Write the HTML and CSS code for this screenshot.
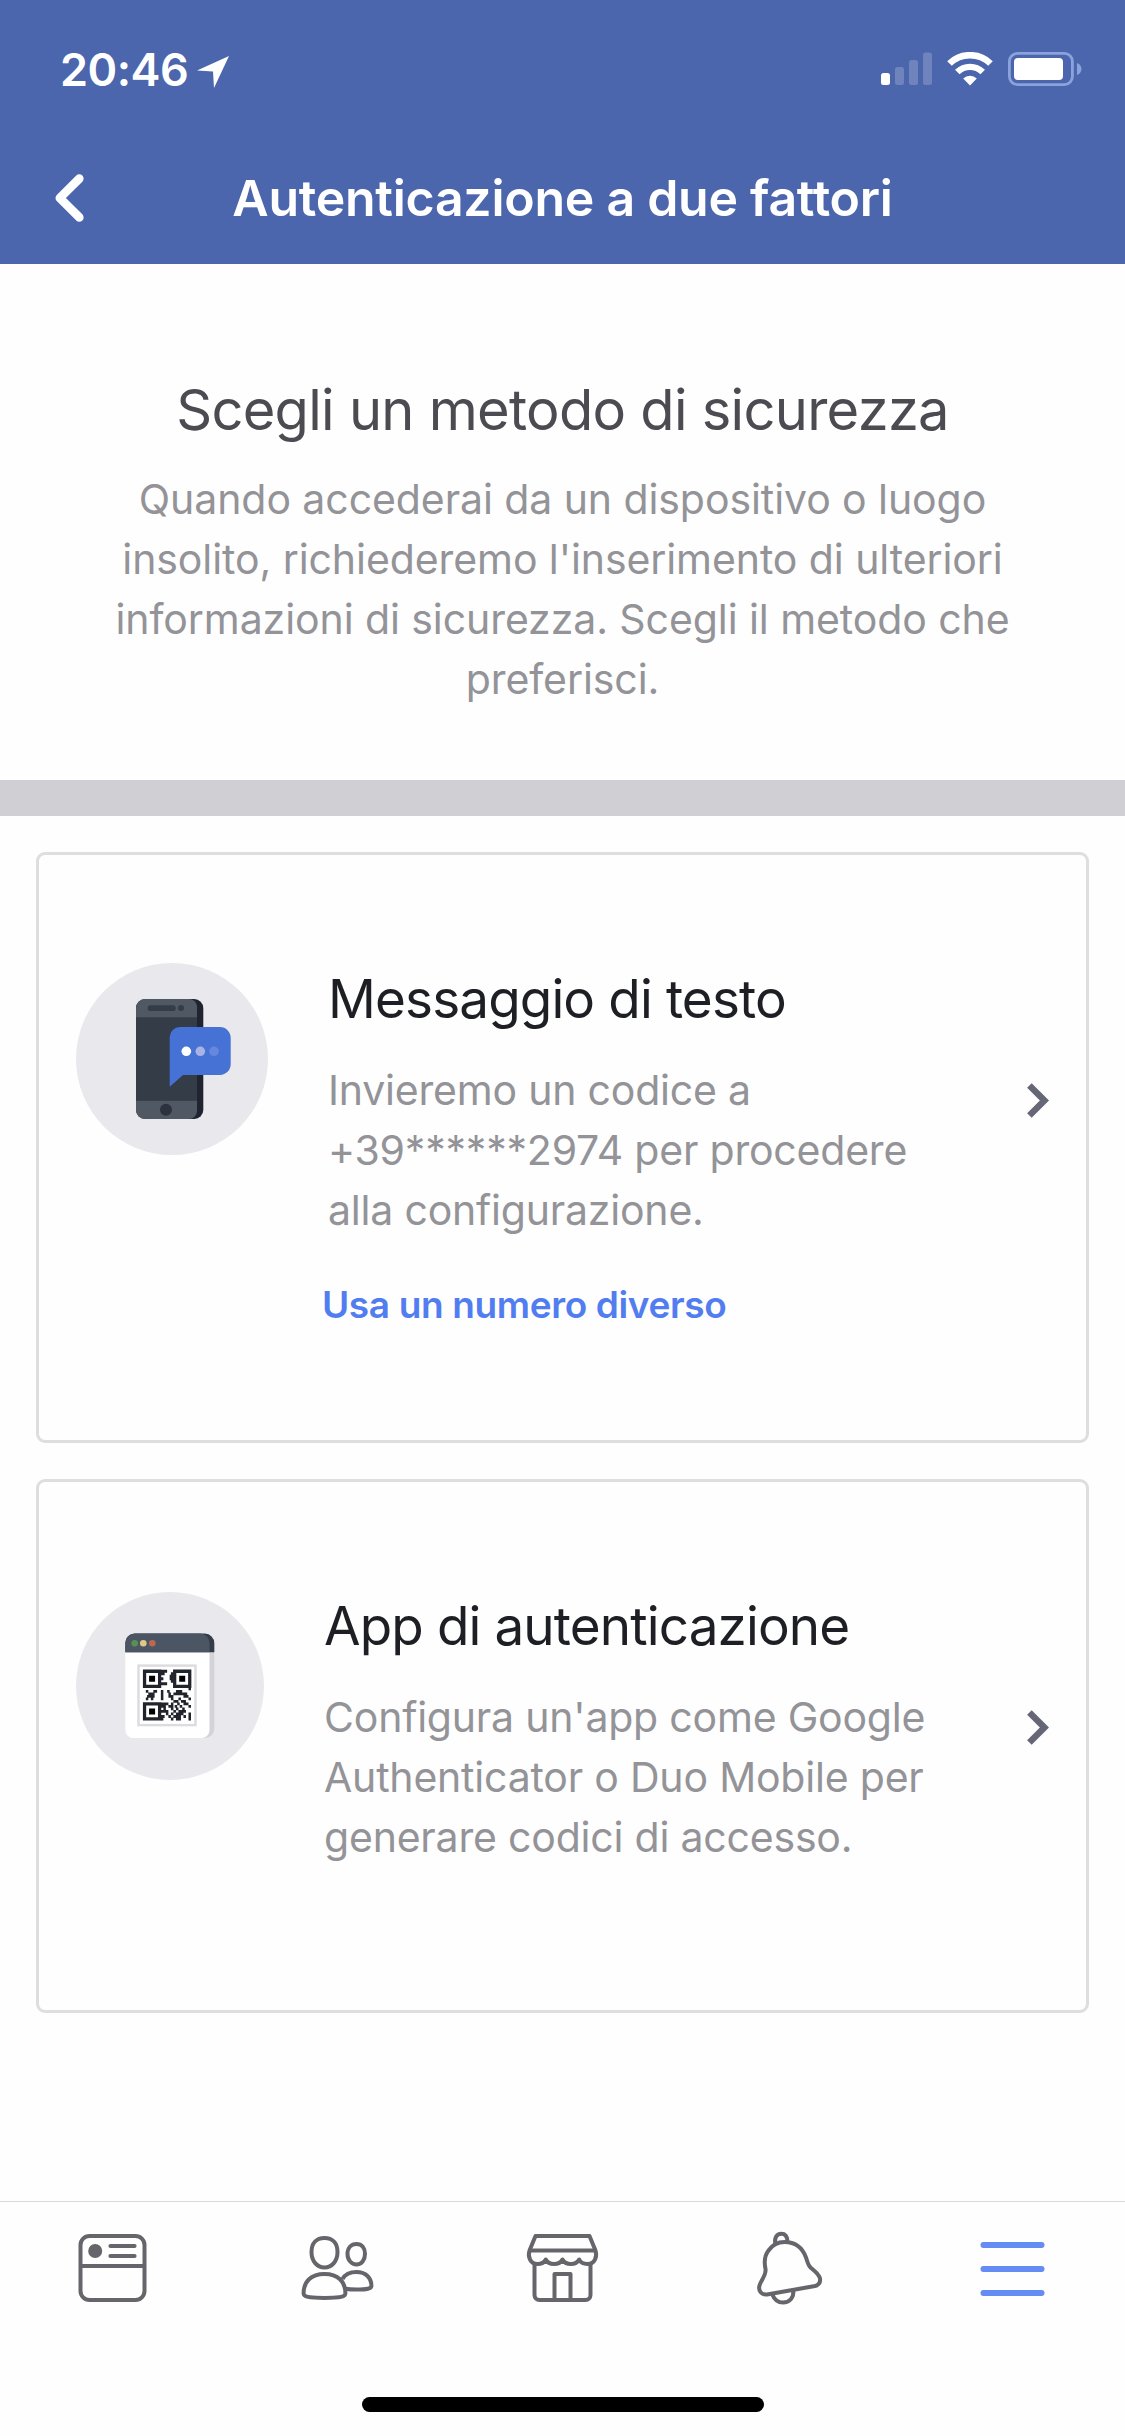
FILE: index.html
```html
<!DOCTYPE html>
<html lang="it">
<head>
    <meta charset="UTF-8">
    <meta name="viewport" content="width=device-width, initial-scale=1.0">
    <title>Autenticazione a due fattori</title>
    <link rel="stylesheet" href="styles.css">
</head>
<body>
    <header class="header">
        <div class="status-bar">
            <span class="time">20:46</span>
            <svg class="location" width="32" height="32" viewBox="0 0 32 32"><path d="M32 0L17 32L16 15.5L0 14.5Z" fill="#fff"/></svg>
            <div class="status-icons">
                <svg width="51" height="34" viewBox="0 0 51 34" fill="#fff">
                    <rect x="0" y="21" width="9" height="12" rx="2.5"/>
                    <rect x="14" y="15" width="9" height="18" rx="2.5" opacity="0.2"/>
                    <rect x="28" y="8" width="9" height="25" rx="2.5" opacity="0.2"/>
                    <rect x="42" y="0.5" width="9" height="32.5" rx="2.5" opacity="0.2"/>
                </svg>
                <svg width="46" height="34" viewBox="0 0 46 34">
                    <path d="M2.5 11.5A29.5 29.5 0 0 1 43.5 11.5" fill="none" stroke="#fff" stroke-width="6.6"/>
                    <path d="M10.3 20A18.2 18.2 0 0 1 35.7 20" fill="none" stroke="#fff" stroke-width="6.4"/>
                    <path d="M23 33.5L16.2 26.6A9.6 9.6 0 0 1 29.8 26.6Z" fill="#fff"/>
                </svg>
                <svg width="74" height="34" viewBox="0 0 74 34">
                    <rect x="1.4" y="1.4" width="63" height="31.2" rx="8" fill="none" stroke="#8ba3dc" stroke-width="2.8"/>
                    <rect x="6" y="6" width="49" height="22" rx="4" fill="#fff"/>
                    <path d="M69 11C75 13 75 21 69 23Z" fill="#8ba3dc"/>
                </svg>
            </div>
        </div>
        <nav class="nav-bar">
            <svg class="back" width="30" height="48" viewBox="0 0 30 48"><path d="M25.3 4.6L5.8 24L25.3 43.4" fill="none" stroke="#fff" stroke-width="8.6" stroke-linecap="round" stroke-linejoin="round"/></svg>
            <h1 class="nav-title">Autenticazione a due fattori</h1>
        </nav>
    </header>

    <main class="content">
        <section class="intro">
            <h2>Scegli un metodo di sicurezza</h2>
            <p>Quando accederai da un dispositivo o luogo insolito, richiederemo l'inserimento di ulteriori informazioni di sicurezza. Scegli il metodo che preferisci.</p>
        </section>

        <section class="methods">
            <div class="card card-sms">
                <svg class="card-icon" width="192" height="192" viewBox="0 0 192 192">
                    <circle cx="96" cy="96" r="96" fill="#e9e9ed"/>
                    <!-- phone -->
                    <rect x="60" y="36" width="67.3" height="120" rx="9" fill="#1f2430"/>
                    <path d="M69 36H113A8 8 0 0 1 121 44V148A8 8 0 0 1 113 156H69A9 9 0 0 1 60 147V45A9 9 0 0 1 69 36Z" fill="#505863"/>
                    <rect x="60" y="54.3" width="61" height="83.5" fill="#343c48"/>
                    <rect x="71.7" y="42.3" width="28" height="5.7" rx="2.8" fill="#343c48"/>
                    <circle cx="105" cy="45" r="3" fill="#343c48"/>
                    <circle cx="90" cy="146.7" r="6" fill="#2c333e"/>
                    <!-- speech bubble -->
                    <path d="M104 64H144A10.7 10.7 0 0 1 154.7 74.7V101.3A10.7 10.7 0 0 1 144 112H107L93.7 123.7V74.3A10.3 10.3 0 0 1 104 64Z" fill="#4672d6"/>
                    <circle cx="110.3" cy="88.3" r="4.8" fill="#fff"/>
                    <circle cx="124.3" cy="88.3" r="4.8" fill="#a9b4e4"/>
                    <circle cx="138" cy="88.3" r="4.8" fill="#6787de"/>
                </svg>
                <div class="card-text">
                    <h3>Messaggio di testo</h3>
                    <p>Invieremo un codice a +39******2974 per procedere alla configurazione.</p>
                    <a class="card-link">Usa un numero diverso</a>
                </div>
                <svg class="chevron" width="22" height="35" viewBox="0 0 22 35"><path d="M2.4 2.5L17.4 17.5L2.4 32.5" fill="none" stroke="#666776" stroke-width="6.5"/></svg>
            </div>

            <div class="card card-app">
                <svg class="card-icon" width="188" height="188" viewBox="0 0 188 188">
                    <circle cx="94" cy="94" r="94" fill="#e9e9ed"/>
                    <!-- browser window -->
                    <rect x="52" y="44" width="86.3" height="102" rx="9" fill="#d3d3d9"/>
                    <path d="M49.3 58H133.5V138A8 8 0 0 1 125.5 146H57.3A8 8 0 0 1 49.3 138Z" fill="#fff"/>
                    <path d="M49.3 60.3V51A9.4 9.4 0 0 1 58.7 41.6H129A9.4 9.4 0 0 1 138.3 51V60.3Z" fill="#363d4a"/>
                    <path d="M49.3 60.3V51A9.4 9.4 0 0 1 58.7 41.6H124A9.4 9.4 0 0 1 133.5 51V60.3Z" fill="#4c5563"/>
                    <circle cx="58.7" cy="51.3" r="3.3" fill="#569152"/>
                    <circle cx="67.3" cy="51.3" r="3.3" fill="#e0c987"/>
                    <circle cx="76.3" cy="51.3" r="3.3" fill="#bd6650"/>
                    <!-- QR code -->
                    <rect x="62.5" y="73.6" width="57" height="59.5" fill="#fff" stroke="#dbdbe0" stroke-width="2.4"/>
                    <g transform="translate(67.3 78) scale(2.51)" stroke="#22242c" stroke-width="1.15" fill="none">
                        <path d="M.5 .5h6v6h-6zM12.5 .5h6v6h-6zM.5 13.5h6v6h-6z" stroke-width="1.3"/>
                        <path d="M2.3 3.5h2.4M2.3 16.5h2.4M14.3 3.5h2.4" stroke="#000" stroke-width="2.4"/>
                        <path d="M7 .5h2.5M7 1.5h1.5M7 3.5h1M7 5.5h2.5M11 1.5h1M10.5 2.5h1.5M10.5 3.5h1.5M11 4.5h1M18 7.5h1"/>
                        <path d="M1 8.5h1M4 8.5h1.5M7 8.5h1M9.5 8.5h1M13 8.5h2.5M2 9.5h2.5M7 9.5h1M10 9.5h1M12 9.5h5.5M1.5 10.5h3M7 10.5h1M10 10.5h2M16 10.5h2M1 11.5h1M3 11.5h1M7 11.5h1M11 11.5h1M14 11.5h1M18 11.5h1"/>
                        <path d="M12 12.5h2M15 12.5h2M7 13.5h3M11 13.5h1M13.5 13.5h1M16 13.5h2M7 14.5h2M10 14.5h2M12.5 14.5h1M14.5 14.5h1M18 14.5h1M8 15.5h1M11 15.5h1M13 15.5h1M15.5 15.5h1M7 16.5h3M12 16.5h1M14 16.5h3M9 17.5h1M11 17.5h1M13 17.5h3M18 17.5h1M7 18.5h1.5M10 18.5h1M12 18.5h3M16 18.5h1M18 18.5h1M7 19.5h1M11 19.5h1M13 19.5h2M18 19.5h1"/>
                    </g>
                </svg>
                <div class="card-text">
                    <h3>App di autenticazione</h3>
                    <p>Configura un'app come Google Authenticator o Duo Mobile per generare codici di accesso.</p>
                </div>
                <svg class="chevron" width="22" height="35" viewBox="0 0 22 35"><path d="M2.4 2.5L17.4 17.5L2.4 32.5" fill="none" stroke="#666776" stroke-width="6.5"/></svg>
            </div>
        </section>
    </main>

    <footer class="footer">
        <div class="tab-bar">
            <svg class="tab" viewBox="0 0 84 84">
                <rect x="10.5" y="10" width="64" height="64" rx="9"/>
                <path d="M10.5 40H74.5"/>
                <path d="M40.4 20H64.6M40.4 30H64.6" stroke-linecap="round"/>
                <circle class="dot" cx="25.2" cy="25" r="7"/>
            </svg>
            <svg class="tab" viewBox="0 0 84 84">
                <path d="M29.5 12C37.5 12 42.5 17 42.5 26C42.5 35 37 41.500 29.5 41.500S16.5 35 16.5 26C16.5 17 21.5 12 29.5 12Z"/>
                <path d="M61.5 18C67 18 70 22 70 28C70 34 66.5 38.500 61.5 38.500S52.5 34 52.5 28C52.5 22 56 18 61.5 18Z"/>
                <path d="M8.600 67.500C8.600 55.500 16 48 29.500 48S50.400 55.500 50.400 67.500C50.400 70.700 46 71.900 29.500 71.900S8.600 70.700 8.600 67.500Z"/>
                <path d="M47.500 53C50 48.500 55 46 61.500 46C71 46 76.400 52 76.400 60C76.400 62.500 72 63.600 61.500 63.600C57 63.600 53 63.300 50.500 62.800"/>
            </svg>
            <svg class="tab" viewBox="0 0 84 84">
                <path d="M15.5 10H69.5L75.5 24.5C77.5 31 74.5 38 67.5 38C63.5 38 60.5 36.5 59.2 33.5C57.5 36.5 54.5 38 51 38S44 36.5 42.5 33.5C41 36.5 38 38 34 38S27.3 36.5 25.8 33.5C24.3 36.5 21.5 38 17.5 38C10.5 38 7.5 31 9.5 24.5Z"/>
                <path d="M9.5 24.5H75.5M14.5 37V69A5 5 0 0 0 19.5 74H65.5A5 5 0 0 0 70.5 69V37"/>
                <path d="M34.5 74V48H50.5V74"/>
            </svg>
            <svg class="tab" viewBox="0 0 84 84">
                <path d="M30.5 18C29 12 31.5 7.8 36.3 7.8C40 7.8 42.3 10.5 42.5 15.5"/>
                <path d="M20.5 43C19 36 20 29 23.5 24.5C28 18 34 16 39.5 16C50 16 57.5 22 61 31.5C63 37 62.5 38.5 65.5 41.500C69.5 45 74 48 75 52.5C75.5 56 74 59 70 60L22 68.5C16.5 69 13 65 14.5 59.5C16 54 21.5 49 20.5 43Z"/>
                <path d="M27.3 68.5C29.5 74 33 76.6 38 76.6C44.5 76.6 49 71.5 48.3 64.8"/>
            </svg>
            <svg class="tab active" viewBox="0 0 84 84">
                <path d="M13.5 19H71.5M13.5 43H71.5M13.5 67H71.5"/>
            </svg>
        </div>
        <div class="home-indicator"></div>
    </footer>
</body>
</html>
```
FILE: styles.css
```css
* {
    box-sizing: border-box;
    margin: 0;
    padding: 0;
}

body {
    font-family: Inter, 'Liberation Sans', sans-serif;
    background-color: #fefefe;
    height: 2436px;
    display: flex;
    flex-direction: column;
}

svg {
    display: block;
    flex-shrink: 0;
}

.header {
    background-color: #4b66ad;
    color: white;
    height: 264px;
}

.status-bar {
    display: flex;
    align-items: center;
    height: 138px;
    padding: 0 43px 0 60px;
}

.time {
    font-size: 45px;
    font-weight: 600;
    letter-spacing: -0.5px;
    width: 137px;
}

.location {
    margin-top: 6px;
}

.status-icons {
    display: flex;
    gap: 15px;
    margin-left: auto;
}

.nav-bar {
    display: grid;
    grid-template-columns: 1fr auto 1fr;
    align-items: center;
    height: 126px;
    padding: 0 54px 6px;
}

.nav-title {
    font-size: 50px;
    font-weight: 600;
    letter-spacing: -0.26px;
}

.content {
    flex: 1;
}

.intro {
    padding: 110px 110px 71px;
    text-align: center;
    border-bottom: 36px solid #d0cfd4;
}

.intro h2 {
    font-size: 56px;
    font-weight: 400;
    line-height: 72px;
    letter-spacing: -0.72px;
    color: #4b4b51;
    margin-bottom: 23px;
}

.intro p,
.card p {
    font-size: 41px;
    line-height: 60px;
    color: #939398;
    letter-spacing: -0.08px;
}

.methods {
    display: flex;
    flex-direction: column;
    gap: 36px;
    padding: 36px;
}

.card {
    display: flex;
    align-items: flex-start;
    gap: 60px;
    border: 3px solid #dededf;
    border-radius: 9px;
    padding: 108px 37px 0;
}

.card-sms {
    height: 591px;
}

.card-app {
    height: 534px;
    padding-top: 110px;
}

.card-text {
    width: 640px;
    padding-top: 4px;
}

.card-app .card-text {
    padding-top: 2px;
}

.card h3 {
    font-size: 53px;
    font-weight: 400;
    line-height: 64px;
    letter-spacing: -0.87px;
    color: #1e1f24;
    margin-bottom: 29px;
}

.card p {
    letter-spacing: -0.2px;
}

.card-link {
    display: block;
    margin: 41px 0 0 -6px;
    font-size: 37px;
    font-weight: 600;
    line-height: 48px;
    letter-spacing: -0.37px;
    color: #527df0;
}

.chevron {
    margin-top: 120px;
    margin-left: auto;
}

.card-app .chevron {
    margin-top: 118px;
}

.footer {
    height: 235px;
    border-top: 1px solid #d9d9dc;
}

.tab-bar {
    display: grid;
    grid-template-columns: repeat(5, 1fr);
    justify-items: center;
    padding: 24px 1px 0 0;
    height: 195px;
}

.tab {
    width: 84px;
    height: 84px;
    fill: none;
    stroke: #66656b;
    stroke-width: 4;
    stroke-linejoin: round;
}

.tab .dot {
    fill: #66656b;
    stroke: none;
}

.tab.active {
    stroke: #658cf2;
    stroke-width: 6;
    stroke-linecap: round;
}

.home-indicator {
    width: 402px;
    height: 15px;
    margin: 0 auto;
    border-radius: 8px;
    background-color: #000;
}
```
